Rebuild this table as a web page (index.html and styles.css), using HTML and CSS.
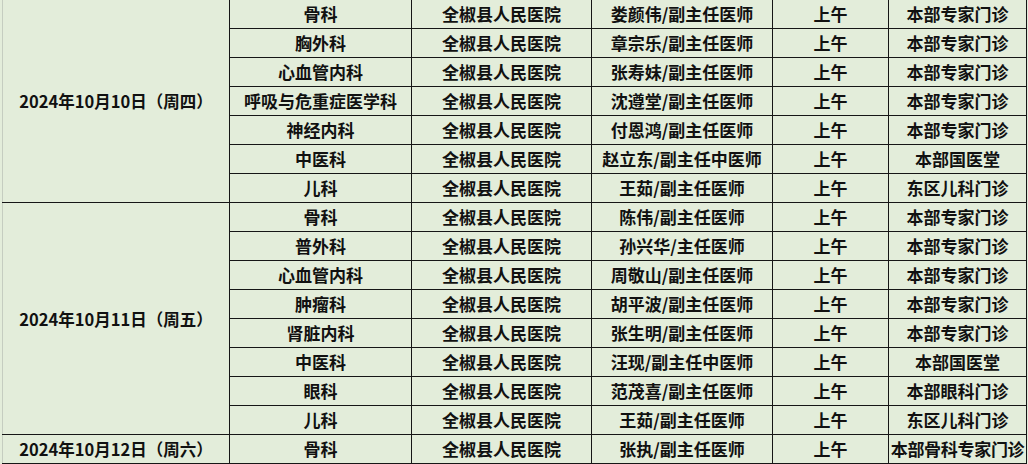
FILE: index.html
```html
<!DOCTYPE html>
<html lang="zh">
<head>
<meta charset="utf-8">
<link rel="stylesheet" href="styles.css">
</head>
<body>
<table class="schedule">
  <colgroup>
    <col class="c-date"><col class="c-dept"><col class="c-hosp"><col class="c-doc"><col class="c-time"><col class="c-loc">
  </colgroup>
  <tbody>
    <tr class="first">
      <td class="date" rowspan="7">2024年10月10日（周四）</td>
      <td>骨科</td><td>全椒县人民医院</td><td>娄颜伟/副主任医师</td><td>上午</td><td>本部专家门诊</td>
    </tr>
    <tr><td>胸外科</td><td>全椒县人民医院</td><td>章宗乐/副主任医师</td><td>上午</td><td>本部专家门诊</td></tr>
    <tr><td>心血管内科</td><td>全椒县人民医院</td><td>张寿妹/副主任医师</td><td>上午</td><td>本部专家门诊</td></tr>
    <tr><td>呼吸与危重症医学科</td><td>全椒县人民医院</td><td>沈遵堂/副主任医师</td><td>上午</td><td>本部专家门诊</td></tr>
    <tr><td>神经内科</td><td>全椒县人民医院</td><td>付恩鸿/副主任医师</td><td>上午</td><td>本部专家门诊</td></tr>
    <tr><td>中医科</td><td>全椒县人民医院</td><td>赵立东/副主任中医师</td><td>上午</td><td>本部国医堂</td></tr>
    <tr><td>儿科</td><td>全椒县人民医院</td><td>王茹/副主任医师</td><td>上午</td><td>东区儿科门诊</td></tr>
    <tr>
      <td class="date" rowspan="8">2024年10月11日（周五）</td>
      <td>骨科</td><td>全椒县人民医院</td><td>陈伟/副主任医师</td><td>上午</td><td>本部专家门诊</td>
    </tr>
    <tr><td>普外科</td><td>全椒县人民医院</td><td>孙兴华/主任医师</td><td>上午</td><td>本部专家门诊</td></tr>
    <tr><td>心血管内科</td><td>全椒县人民医院</td><td>周敬山/副主任医师</td><td>上午</td><td>本部专家门诊</td></tr>
    <tr><td>肿瘤科</td><td>全椒县人民医院</td><td>胡平波/副主任医师</td><td>上午</td><td>本部专家门诊</td></tr>
    <tr><td>肾脏内科</td><td>全椒县人民医院</td><td>张生明/副主任医师</td><td>上午</td><td>本部专家门诊</td></tr>
    <tr><td>中医科</td><td>全椒县人民医院</td><td>汪现/副主任中医师</td><td>上午</td><td>本部国医堂</td></tr>
    <tr><td>眼科</td><td>全椒县人民医院</td><td>范茂喜/副主任医师</td><td>上午</td><td>本部眼科门诊</td></tr>
    <tr><td>儿科</td><td>全椒县人民医院</td><td>王茹/副主任医师</td><td>上午</td><td>东区儿科门诊</td></tr>
    <tr>
      <td class="date">2024年10月12日（周六）</td>
      <td>骨科</td><td>全椒县人民医院</td><td>张执/副主任医师</td><td>上午</td><td class="tight">本部骨科专家门诊</td>
    </tr>
  </tbody>
</table>
</body>
</html>
```

FILE: styles.css
```css
html, body {
  margin: 0;
  padding: 0;
  background: #e3edda;
}
body {
  padding-left: 2px;
  font-family: "Noto Sans CJK SC", "Noto Sans", sans-serif;
  color: #111;
}
.schedule {
  border-collapse: collapse;
  table-layout: fixed;
  width: 1024px;
  font-size: 17px;
  font-weight: 700;
}
.c-date { width: 227px; }
.c-dept { width: 182px; }
.c-hosp { width: 180px; }
.c-doc { width: 181px; }
.c-time { width: 116px; }
.c-loc { width: 138px; }
.schedule td {
  border: 1px solid #161616;
  height: 28px;
  padding: 0;
  text-align: center;
  vertical-align: middle;
  line-height: 28px;
  white-space: nowrap;
  overflow: hidden;
}
.schedule .first td {
  border-top: none;
}
.schedule td.date {
  border-left: 1px solid #c5cdc0;
  font-size: 16.5px;
}
.schedule td.tight {
  letter-spacing: -0.3px;
}
```
